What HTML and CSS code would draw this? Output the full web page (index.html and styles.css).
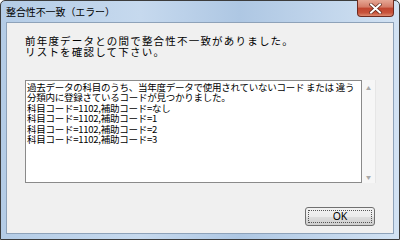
FILE: index.html
```html
<!DOCTYPE html>
<html lang="ja">
<head>
    <meta charset="UTF-8">
    <title>整合性不一致（エラー）</title>
    <link rel="stylesheet" href="styles.css">
</head>
<body>
    <div class="window">
        <div class="titlebar">
            <span class="title">整合性不一致（エラー）</span>
            <div class="close-btn">
                <svg width="13" height="11" viewBox="0 0 13 11">
                    <path d="M2 1.5 L11 9.5 M11 1.5 L2 9.5" stroke="#5a2418" stroke-width="3.4" stroke-linecap="square"/>
                    <path d="M2 1.5 L11 9.5 M11 1.5 L2 9.5" stroke="#ffffff" stroke-width="2" stroke-linecap="square"/>
                </svg>
            </div>
        </div>

        <div class="client">
            <div class="message">
                <p>前年度データとの間で整合性不一致がありました。</p>
                <p>リストを確認して下さい。</p>
            </div>

            <div class="list-box">
                <div class="list-text">
                    <p>過去データの科目のうち、当年度データで使用されていないコード または 違う</p>
                    <p>分類内に登録さているコードが見つかりました。</p>
                    <p>科目コード=1102,補助コード=なし</p>
                    <p>科目コード=1102,補助コード=1</p>
                    <p>科目コード=1102,補助コード=2</p>
                    <p>科目コード=1102,補助コード=3</p>
                </div>
                <div class="scrollbar">
                    <span class="arrow">&#9650;</span>
                    <span class="arrow">&#9660;</span>
                </div>
            </div>

            <div class="buttons">
                <button class="ok-btn"><span>OK</span></button>
            </div>
        </div>
    </div>
</body>
</html>
```

FILE: styles.css
```css
body {
    margin: 0;
    font-family: "Noto Sans CJK JP", "Noto Sans", sans-serif;
    background-color: #ffffff;
}
p {
    margin: 0;
    white-space: nowrap;
}
.window {
    width: 400px;
    height: 240px;
    box-sizing: border-box;
    border: 1px solid #3c3c3c;
    border-radius: 5px 5px 0 0;
    background: linear-gradient(to right, #b4cce6, #c6d9ee 35%, #aec7e3 60%, #d2e2f3);
    display: flex;
    flex-direction: column;
}
.titlebar {
    position: relative;
    height: 21px;
    flex-shrink: 0;
    display: flex;
    align-items: center;
    padding-left: 5px;
}
.title {
    font-size: 10px;
    color: #000;
    letter-spacing: -0.1px;
    margin-top: -1px;
}
.close-btn {
    position: absolute;
    top: -1px;
    right: 5px;
    width: 37px;
    height: 17px;
    box-sizing: border-box;
    border: 1px solid #6e2a1f;
    border-top: none;
    border-radius: 0 0 4px 4px;
    background: linear-gradient(#e6a795, #d47a66 45%, #c0452f 50%, #c8533b 80%, #dd8a70);
    display: flex;
    align-items: center;
    justify-content: center;
}
.client {
    flex: 1;
    margin: 0 5px 5px 5px;
    border: 1px solid #8ea2b9;
    background-color: #f0f0f0;
    display: flex;
    flex-direction: column;
    padding: 12px 17px 0 18px;
}
.message {
    font-size: 10.5px;
    line-height: 11px;
    letter-spacing: 1.2px;
    color: #000;
}
.list-box {
    margin-top: 23px;
    height: 103px;
    display: flex;
}
.list-text {
    flex: 1;
    box-sizing: border-box;
    border: 1px solid #8a8a8a;
    background-color: #ffffff;
    font-size: 9.5px;
    line-height: 10.4px;
    padding: 1px 0 0 1px;
    letter-spacing: -0.25px;
    overflow: hidden;
}
.scrollbar {
    width: 14px;
    background-color: #f6f6f6;
    border-right: 1px solid #e6e6e6;
    display: flex;
    flex-direction: column;
    justify-content: space-between;
    align-items: center;
    padding: 5px 0 4px 0;
    box-sizing: border-box;
}
.arrow {
    font-size: 5px;
    color: #a8a8a8;
    line-height: 5px;
}
.buttons {
    display: flex;
    justify-content: flex-end;
    margin-top: 24px;
    padding-right: 1px;
}
.ok-btn {
    width: 70px;
    height: 19px;
    box-sizing: border-box;
    border: 1px solid #707070;
    border-radius: 3px;
    background: linear-gradient(#f2f2f2, #ebebeb 50%, #dddddd 51%, #cfcfcf);
    font-family: "Noto Sans", sans-serif;
    font-size: 10.5px;
    color: #000;
    padding: 2px;
    display: flex;
}
.ok-btn span {
    flex: 1;
    border: 1px dotted #555;
    line-height: 11px;
    text-align: center;
}
```
